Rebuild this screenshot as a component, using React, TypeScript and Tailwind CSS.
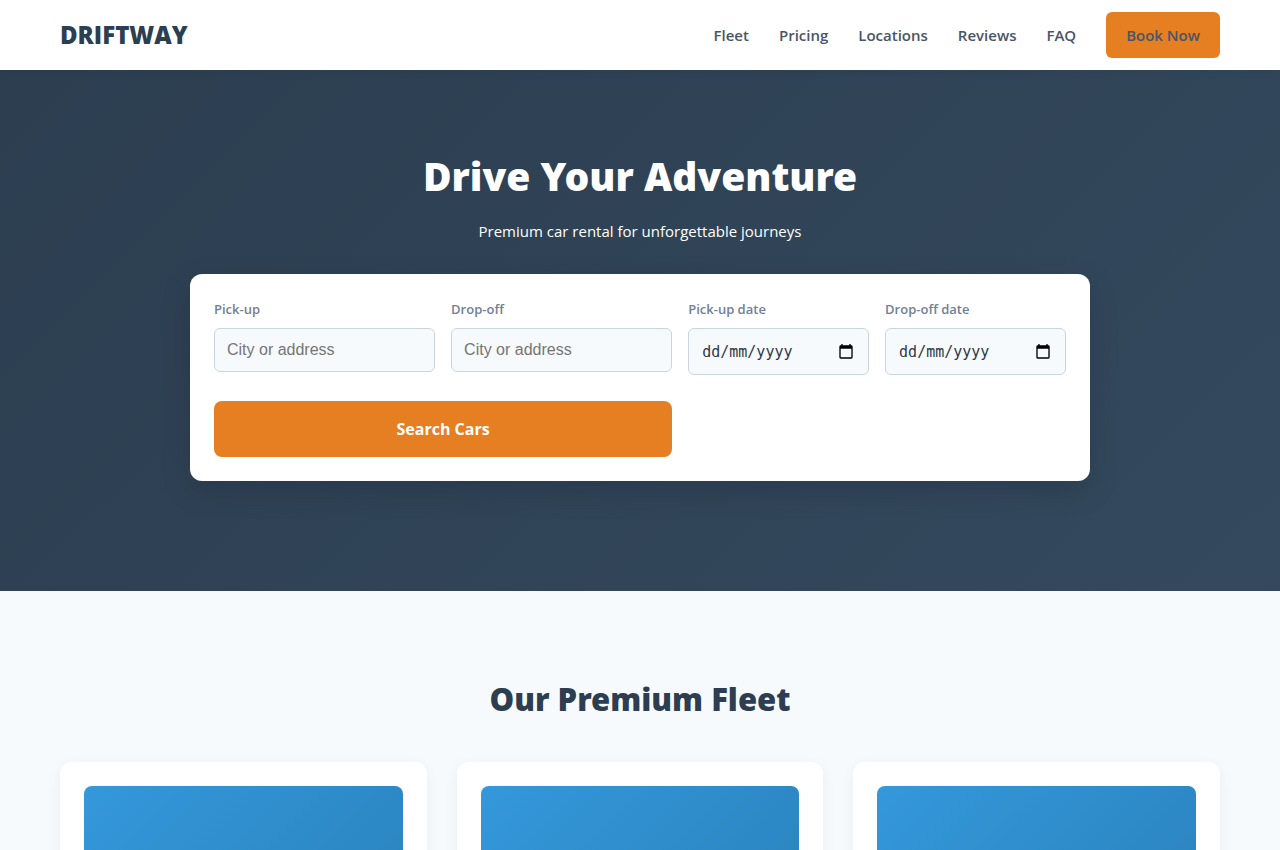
import React from "react";

const navLinks = ["Fleet", "Pricing", "Locations", "Reviews", "FAQ"];
const cars = ["car-1", "car-2", "car-3"];

function PlaceField({ id, label }: { id: string; label: string }) {
  return (
    <div className="flex flex-col gap-2">
      <label htmlFor={id} className="text-[13px] leading-[22px] font-semibold text-[#718096]">
        {label}
      </label>
      <input
        id={id}
        type="text"
        placeholder="City or address"
        className="h-11 w-full rounded-md border border-[#cbd5e0] bg-[#f7fafc] px-3 font-['Liberation_Sans',Arial,sans-serif] text-base text-[#2d3748] placeholder:text-[#757575]"
      />
    </div>
  );
}

function DateField({ id, label }: { id: string; label: string }) {
  return (
    <div className="flex flex-col gap-2">
      <label htmlFor={id} className="text-[13px] leading-[22px] font-semibold text-[#718096]">
        {label}
      </label>
      <div className="flex h-[47px] items-center rounded-md border border-[#cbd5e0] bg-[#f7fafc] pr-3.5 pl-[13px]">
        <input
          id={id}
          type="text"
          placeholder="dd/mm/yyyy"
          className="h-full min-w-0 flex-1 bg-transparent font-['DejaVu_Sans_Mono',monospace] text-[15px] text-[#2d3748] outline-none placeholder:text-[#2d3748]"
        />
        <button type="button" aria-label={`Choose ${label.toLowerCase()}`} className="shrink-0">
          <svg width="16" height="16" viewBox="0 0 24 24" fill="black" aria-hidden="true">
            <path d="M20 2h-1V0h-2v2H7V0H5v2H4c-1.100 0-2 .900-2 2v16c0 1.100.900 2 2 2h16c1.100 0 2-.900 2-2V4c0-1.100-.900-2-2-2zm0 18H4V7h16v13z" />
          </svg>
        </button>
      </div>
    </div>
  );
}

export default function App() {
  return (
    <div className="min-h-screen bg-[#f7fafc] font-['Open_Sans','Noto_Sans',sans-serif] text-[#2c3e50]">
      <header className="relative bg-white shadow-[0_2px_10px_rgba(0,0,0,0.05)]">
        <div className="mx-auto flex h-[70px] max-w-[1200px] items-center justify-between px-5">
          <a href="#top" className="text-2xl font-extrabold">
            DRIFTWAY
          </a>
          <nav className="flex items-center gap-[30px] text-[15px] font-semibold text-[#4a5568]">
            {navLinks.map((name) => (
              <a key={name} href={`#${name.toLowerCase()}`}>
                {name}
              </a>
            ))}
            <a href="#book" className="rounded-md bg-[#e67e22] px-5 py-[11px] leading-6">
              Book Now
            </a>
          </nav>
        </div>
      </header>

      <main id="top">
        <section className="bg-[linear-gradient(135deg,#2c3e50,#34495e)] px-5 pt-20 pb-[110px] text-center text-white">
          <h1 className="font-['Noto_Sans',sans-serif] text-[39px] leading-[52px] font-black">Drive Your Adventure</h1>
          <p className="mt-4 text-[15px] leading-[26px]">Premium car rental for unforgettable journeys</p>
          <form
            id="book"
            className="mx-auto mt-[30px] grid max-w-[900px] grid-cols-[minmax(0,11fr)_minmax(0,11fr)_minmax(0,9fr)_minmax(0,9fr)] gap-x-4 gap-y-[26px] rounded-xl bg-white p-6 text-left shadow-[0_10px_30px_rgba(0,0,0,0.15)]"
          >
            <PlaceField id="pickup" label="Pick-up" />
            <PlaceField id="dropoff" label="Drop-off" />
            <DateField id="pickup-date" label="Pick-up date" />
            <DateField id="dropoff-date" label="Drop-off date" />
            <button type="button" className="col-span-2 h-14 rounded-lg bg-[#e67e22] text-base font-bold text-white">
              Search Cars
            </button>
          </form>
        </section>

        <section id="fleet" className="mx-auto max-w-[1200px] px-5 py-20">
          <h2 className="text-center font-['Noto_Sans',sans-serif] text-[31px] leading-[56px] font-black">
            Our Premium Fleet
          </h2>
          <div className="mt-[35px] grid grid-cols-3 gap-[30px]">
            {cars.map((car) => (
              <article key={car} className="rounded-xl bg-white p-6 shadow-[0_4px_15px_rgba(0,0,0,0.05)]">
                <div className="h-[200px] rounded-lg bg-[linear-gradient(135deg,#3498db,#2980b9)]" />
              </article>
            ))}
          </div>
        </section>
      </main>
    </div>
  );
}
